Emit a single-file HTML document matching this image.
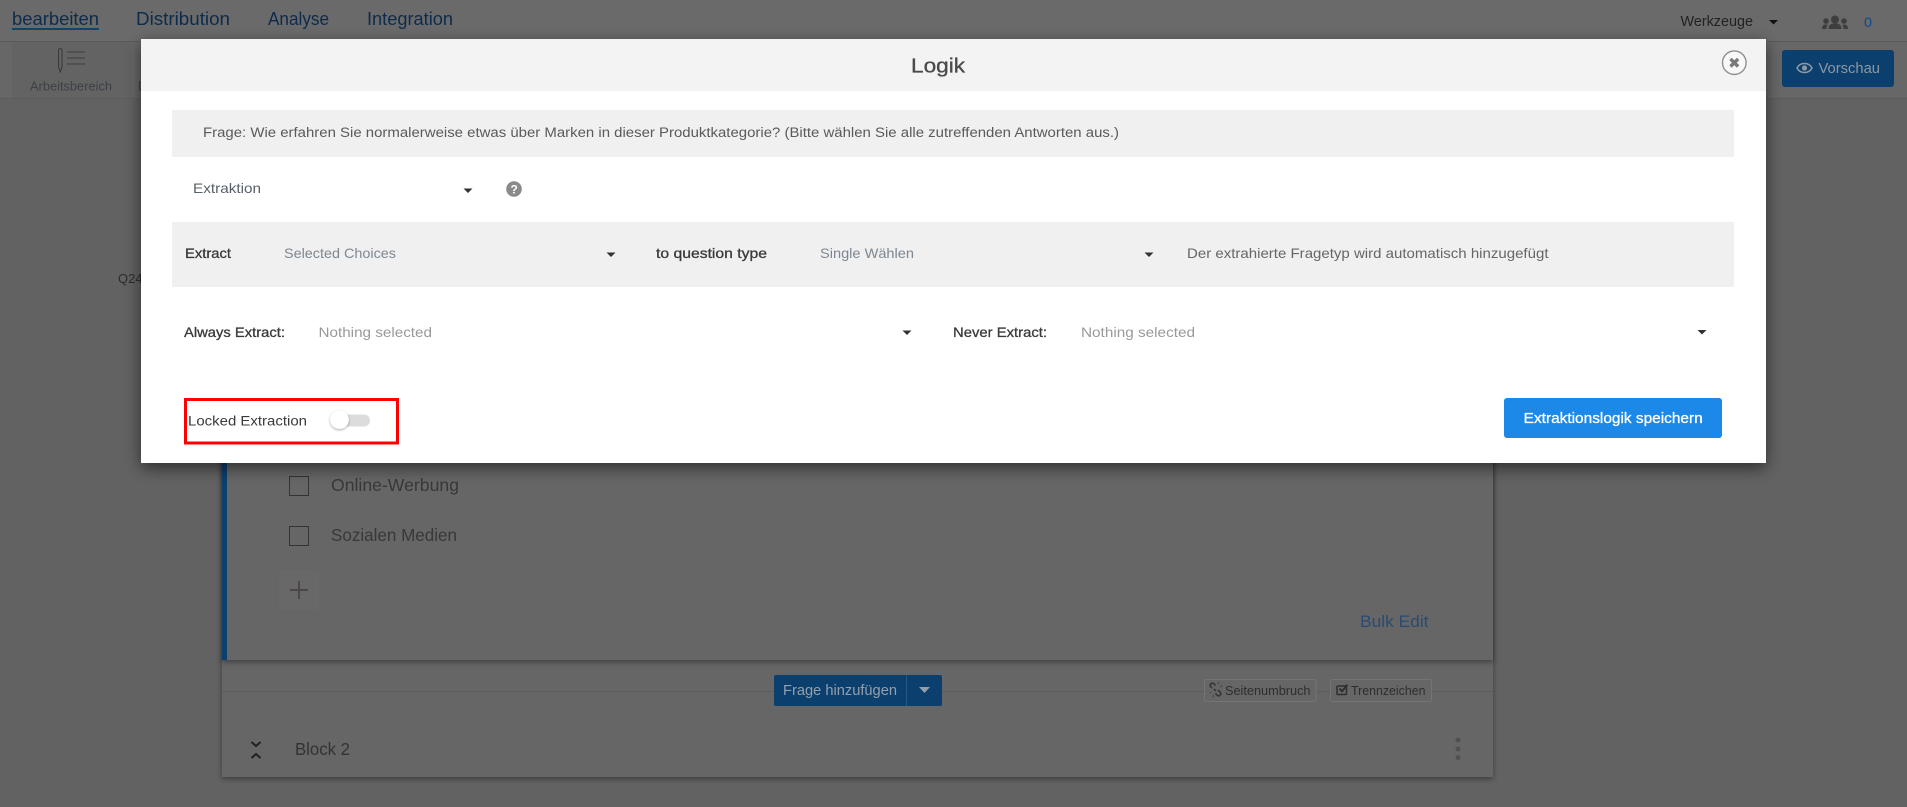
<!DOCTYPE html>
<html lang="de"><head><meta charset="utf-8"><title>Logik</title>
<style>
html,body{margin:0;padding:0;width:1907px;height:807px;overflow:hidden;background:#626262}
svg{display:block;position:absolute;left:0;top:0}
text{font-family:"Liberation Sans",sans-serif}
.m{stroke:currentColor;stroke-width:.3px}
</style></head><body>
<svg width="1907" height="807" viewBox="0 0 1907 807" xmlns="http://www.w3.org/2000/svg">
<defs><filter id="s" x="-10%" y="-20%" width="120%" height="150%"><feDropShadow dx="0" dy="5" stdDeviation="8" flood-color="#000" flood-opacity=".55"/></filter>
<filter id="c" x="-5%" y="-10%" width="110%" height="120%"><feDropShadow dx="0" dy="2" stdDeviation="3" flood-color="#000" flood-opacity=".4"/></filter>
<filter id="k" x="-40%" y="-40%" width="180%" height="200%"><feDropShadow dx="0" dy="1" stdDeviation="1.2" flood-color="#000" flood-opacity=".35"/></filter></defs>

<!-- page background -->
<rect width="1907" height="807" fill="#626262"/>
<rect width="1907" height="41" fill="#6a6a6a"/>
<rect y="41" width="1907" height="57" fill="#676767"/>
<rect y="41" width="1907" height="1" fill="#5a5a5a"/>
<rect y="98" width="1907" height="1" fill="#5c5c5c"/>
<rect x="12" y="42" width="119" height="56" fill="#636363"/>
<g fill="#0d2b4c" font-size="18">
<text x="12" y="25" textLength="87" lengthAdjust="spacingAndGlyphs">bearbeiten</text>
<text x="136" y="25" textLength="94" lengthAdjust="spacingAndGlyphs">Distribution</text>
<text x="268" y="25" textLength="61" lengthAdjust="spacingAndGlyphs">Analyse</text>
<text x="367" y="25" textLength="86" lengthAdjust="spacingAndGlyphs">Integration</text>
</g>
<rect x="12" y="28" width="87" height="2" fill="#0b4766"/>
<path d="M58.500 49.500a2 2 0 0 1 3.500 0v17l-1.750 5.500-1.750-5.500z" fill="none" stroke="#383838" stroke-width="1"/>
<path d="M67 52h18M67 58h18M67 64h18" stroke="#3e3e3e" stroke-width="1"/>
<text x="30" y="90.500" font-size="12.500" fill="#3c4147" textLength="82" lengthAdjust="spacingAndGlyphs">Arbeitsbereich</text>
<text x="138" y="90.500" font-size="12.500" fill="#443c3a">D</text>
<text x="1680.500" y="26" font-size="14.500" fill="#222" textLength="72.500" lengthAdjust="spacingAndGlyphs">Werkzeuge</text>
<path d="M1769 20h9l-4.500 4.500z" fill="#111"/>
<g fill="#3e3e3e"><circle cx="1835" cy="19.500" r="4"/><path d="M1828.500 29c0-4.500 2.500-5.500 6.500-5.500s6.500 1 6.500 5.500z"/><circle cx="1826" cy="21" r="2.800"/><path d="M1822 29c0-3.500 1.200-4.500 4-4.500.7 0 1.200.1 1.700.3-.7.900-1.200 2.200-1.200 4.200z"/><circle cx="1844" cy="21" r="2.800"/><path d="M1848 29c0-3.500-1.200-4.500-4-4.500-.7 0-1.200.1-1.700.3.700.9 1.200 2.200 1.200 4.200z"/></g>
<text x="1864" y="27" font-size="14" fill="#0c4a8c" textLength="8" lengthAdjust="spacingAndGlyphs">0</text>
<rect x="1782" y="50" width="112" height="37" rx="3" fill="#0a3f6e"/>
<path d="M1797 68c3-6 12-6 15 0-3 6-12 6-15 0z" fill="none" stroke="#8c98a3" stroke-width="1.500"/><circle cx="1804.500" cy="68" r="2.600" fill="#8c98a3"/>
<text x="1818.500" y="73" font-size="14.500" fill="#8c98a3" textLength="61.500" lengthAdjust="spacingAndGlyphs">Vorschau</text>
<text x="118" y="283" font-size="13" fill="#2c2c2c">Q24</text>

<!-- outer block and card -->
<rect x="222" y="300" width="1271" height="477" fill="#666" filter="url(#c)"/>
<rect x="222" y="691" width="1271" height="1" fill="#5c5c5c"/>
<rect x="222" y="300" width="1271" height="360" fill="#666" filter="url(#c)"/>
<rect x="222" y="300" width="5" height="360" fill="#0a3f6e"/>
<g fill="none" stroke="#333" stroke-width="1"><rect x="289.500" y="476.500" width="19" height="19"/><rect x="289.500" y="526.500" width="19" height="19"/></g>
<g font-size="17.500" fill="#383838">
<text x="331" y="491" textLength="128" lengthAdjust="spacingAndGlyphs">Online-Werbung</text>
<text x="331" y="541" textLength="126" lengthAdjust="spacingAndGlyphs">Sozialen Medien</text>
</g>
<rect x="279" y="570" width="40" height="40" fill="#686868"/>
<path d="M299 581v18M290 590h18" stroke="#4c4848" stroke-width="2"/>
<text x="1360" y="627" font-size="17" fill="#2a4a74" textLength="68.500" lengthAdjust="spacingAndGlyphs">Bulk Edit</text>
<rect x="774" y="675" width="168" height="31" rx="2" fill="#0a3f6e"/>
<rect x="906" y="675" width="1" height="31" fill="#265983"/>
<text x="783" y="695" font-size="14.500" fill="#93a0ab" textLength="114" lengthAdjust="spacingAndGlyphs">Frage hinzufügen</text>
<path d="M919 687h11l-5.500 6z" fill="#93a0ab"/>
<rect x="1204.500" y="679.500" width="111.500" height="22" rx="2" fill="#666" stroke="#747474"/>
<rect x="1330.500" y="679.500" width="101" height="22" rx="2" fill="#666" stroke="#747474"/>
<path d="M1212 688l-1.500-1.500a2.200 2.200 0 0 1 3-3l2 2M1218 690l2.500 2.500a2.200 2.200 0 0 1-3 3l-2-2M1214 689l2 2" fill="none" stroke="#333" stroke-width="1.500"/>
<path d="M1218 684l1-2M1220 687l2-1M1211 692l-1 1M1214 695l-1 2" stroke="#444" stroke-width="1"/>
<text x="1225" y="695" font-size="12.500" fill="#2e2e2e" textLength="85.500" lengthAdjust="spacingAndGlyphs">Seitenumbruch</text>
<rect x="1337" y="686" width="9.500" height="8.500" rx="1" fill="none" stroke="#2e2e2e" stroke-width="1.500"/>
<path d="M1339.500 688.500l2.500 2.800 5.500-6.500" fill="none" stroke="#2e2e2e" stroke-width="1.900"/>
<text x="1351" y="695" font-size="12.500" fill="#2e2e2e" textLength="74.500" lengthAdjust="spacingAndGlyphs">Trennzeichen</text>
<path d="M251.500 742l4.500 4 4.500-4M251.500 758l4.500-4 4.500 4" fill="none" stroke="#222" stroke-width="2"/>
<text x="295" y="755" font-size="17.500" fill="#333" textLength="55" lengthAdjust="spacingAndGlyphs">Block 2</text>
<g fill="#505050"><circle cx="1458" cy="740" r="2.500"/><circle cx="1458" cy="749" r="2.500"/><circle cx="1458" cy="757.500" r="2.500"/></g>

<!-- modal -->
<rect x="141" y="39" width="1625" height="424" fill="#fff" filter="url(#s)"/>
<rect x="141" y="39" width="1625" height="52" fill="#f3f3f3"/>
<text x="911" y="72.500" font-size="20" class="m" fill="#4a4a4a" color="#4a4a4a" textLength="54" lengthAdjust="spacingAndGlyphs">Logik</text>
<circle cx="1734.300" cy="62.700" r="11.800" fill="#f8f8f8" stroke="#8f8f8f" stroke-width="1.400"/>
<path d="M1730.500 58.900l7.600 7.600M1738.100 58.900l-7.600 7.600" stroke="#7a7a7a" stroke-width="3.400"/>

<rect x="172" y="110" width="1562" height="47" fill="#f0f0f0"/>
<text x="203" y="137" font-size="13.500" fill="#5a5a5a" textLength="916" lengthAdjust="spacingAndGlyphs">Frage: Wie erfahren Sie normalerweise etwas über Marken in dieser Produktkategorie? (Bitte wählen Sie alle zutreffenden Antworten aus.)</text>
<text x="193" y="193" font-size="14" fill="#58616b" textLength="68" lengthAdjust="spacingAndGlyphs">Extraktion</text>
<path d="M463.500 188.500h9l-4.500 4.500z" fill="#333"/>
<circle cx="514" cy="189" r="7.800" fill="#8a8a8a"/>
<text x="510.500" y="193.500" font-size="12" font-weight="bold" fill="#fff">?</text>

<rect x="172" y="222" width="1562" height="65" fill="#f0f0f0"/>
<text x="185" y="258" font-size="14" class="m" fill="#3a3a3a" color="#3a3a3a" textLength="46" lengthAdjust="spacingAndGlyphs">Extract</text>
<text x="284" y="258" font-size="14" fill="#7d8791" textLength="112" lengthAdjust="spacingAndGlyphs">Selected Choices</text>
<path d="M606.500 252.500h9l-4.500 4.500z" fill="#333"/>
<text x="656" y="258" font-size="14" class="m" fill="#3a3a3a" color="#3a3a3a" textLength="111" lengthAdjust="spacingAndGlyphs">to question type</text>
<text x="820" y="258" font-size="14" fill="#7d8791" textLength="94" lengthAdjust="spacingAndGlyphs">Single Wählen</text>
<path d="M1144.500 252.500h9l-4.500 4.500z" fill="#333"/>
<text x="1187" y="258" font-size="14" fill="#666" textLength="361.500" lengthAdjust="spacingAndGlyphs">Der extrahierte Fragetyp wird automatisch hinzugefügt</text>

<text x="184" y="337" font-size="14" class="m" fill="#3a3a3a" color="#3a3a3a" textLength="101" lengthAdjust="spacingAndGlyphs">Always Extract:</text>
<text x="318.500" y="337" font-size="14" fill="#999" textLength="113.500" lengthAdjust="spacingAndGlyphs">Nothing selected</text>
<path d="M902.500 330.500h9l-4.500 4.500z" fill="#333"/>
<text x="953" y="337" font-size="14" class="m" fill="#3a3a3a" color="#3a3a3a" textLength="94" lengthAdjust="spacingAndGlyphs">Never Extract:</text>
<text x="1081" y="337" font-size="14" fill="#999" textLength="114" lengthAdjust="spacingAndGlyphs">Nothing selected</text>
<path d="M1697.500 330h9l-4.500 4.500z" fill="#333"/>

<rect x="185.500" y="399.500" width="212" height="43.500" fill="none" stroke="#f00" stroke-width="3"/>
<text x="188" y="425.500" font-size="14" fill="#3a3a3a" textLength="119" lengthAdjust="spacingAndGlyphs">Locked Extraction</text>
<rect x="332" y="414.500" width="38" height="12" rx="6" fill="#dcdcdc"/>
<circle cx="339.500" cy="419.700" r="9.300" fill="#fff" filter="url(#k)"/>

<rect x="1504" y="398" width="218" height="40" rx="3" fill="#1c88e8"/>
<text x="1523.700" y="423" font-size="14.500" class="m" fill="#fff" color="#fff" textLength="179" lengthAdjust="spacingAndGlyphs">Extraktionslogik speichern</text>
</svg>
</body></html>
